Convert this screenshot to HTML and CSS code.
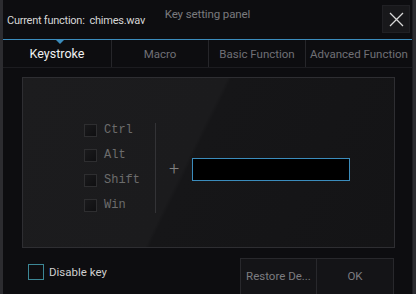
FILE: index.html
```html
<!DOCTYPE html>
<html lang="en">
<head>
    <meta charset="UTF-8">
    <title>Key setting panel</title>
    <link rel="stylesheet" href="styles.css">
</head>
<body>
    <div class="window">
        <div class="titlebar">
            <span class="current">Current function:&nbsp; chimes.wav</span>
            <span class="title">Key setting panel</span>
            <button class="close-btn">
                <svg width="15" height="15" viewBox="0 0 15 15"><path d="M1 1L14 14M14 1L1 14" stroke="#d8d8d8" stroke-width="1.3"/></svg>
            </button>
        </div>

        <div class="tabs">
            <div class="tab active">Keystroke</div>
            <div class="tab">Macro</div>
            <div class="tab">Basic Function</div>
            <div class="tab">Advanced Function</div>
        </div>

        <div class="panel">
            <div class="modifiers">
                <label class="mod"><span class="box"></span>Ctrl</label>
                <label class="mod"><span class="box"></span>Alt</label>
                <label class="mod"><span class="box"></span>Shift</label>
                <label class="mod"><span class="box"></span>Win</label>
            </div>
            <div class="plus">+</div>
            <div class="key-input"></div>
        </div>

        <div class="footer">
            <label class="disable"><span class="check"></span>Disable key</label>
            <div class="actions">
                <button class="btn">Restore De...</button>
                <button class="btn">OK</button>
            </div>
        </div>
    </div>
</body>
</html>
```

FILE: styles.css
```css
body {
    margin: 0;
    background: #2c2c30;
    font-family: Roboto, 'Liberation Sans', Arial, sans-serif;
    font-size: 11px;
    overflow: hidden;
}

.window {
    width: 410px;
    height: 294px;
    margin-left: 3px;
    background: #0d0d10;
    border-right: 1px solid #1e1e22;
    box-sizing: border-box;
}

.titlebar {
    position: relative;
    height: 39px;
    display: flex;
    align-items: center;
    justify-content: space-between;
    padding: 0 2px 0 4px;
    border-bottom: 1px solid #3b8cbc;
}

.current {
    color: #d6d6d6;
    font-size: 11px;
    letter-spacing: -0.25px;
    margin-top: 2px;
}

.title {
    position: absolute;
    left: 0;
    right: 0;
    top: 7px;
    text-align: center;
    color: #7a7a7e;
    font-size: 11.5px;
    letter-spacing: -0.1px;
}

.close-btn {
    width: 28px;
    height: 28px;
    margin-bottom: 1px;
    background: #18181b;
    border: 1px solid #202024;
    padding: 0;
    display: flex;
    align-items: center;
    justify-content: center;
}

.tabs {
    display: flex;
    height: 27px;
    border-bottom: 1px solid #1c1c20;
}

.tab {
    position: relative;
    flex: 0 0 97px;
    display: flex;
    align-items: center;
    justify-content: center;
    color: #707076;
    font-size: 11.5px;
    border-right: 1px solid #26262a;
    box-sizing: border-box;
}

.tab:first-child {
    flex-basis: 109px;
}

.tab:last-child {
    flex: 1;
    border-right: none;
}

.tab.active {
    color: #f0f0f0;
    font-size: 12.5px;
}

.tab.active::before {
    content: '';
    position: absolute;
    top: 0;
    left: 53px;
    border-left: 4px solid transparent;
    border-right: 4px solid transparent;
    border-top: 4px solid #3b8cbc;
}

.panel {
    margin: 9px 17px 0 19px;
    height: 171px;
    box-sizing: border-box;
    border: 1px solid #2e2e32;
    background: linear-gradient(116deg, #1c1c1e 0%, #1b1b1d 45%, #161618 46%, #141416 100%);
    display: flex;
    align-items: center;
    padding: 10px 0 0 61px;
}

.modifiers {
    display: flex;
    flex-direction: column;
    gap: 11px;
    padding-right: 15px;
    border-right: 1px solid #333336;
    height: 90px;
    justify-content: center;
}

.mod {
    display: flex;
    align-items: center;
    gap: 7px;
    height: 14px;
    font-family: 'Liberation Mono', 'Courier New', monospace;
    font-size: 12px;
    color: #6c6c6c;
}

.box {
    width: 11px;
    height: 11px;
    border: 1px solid #2e2e30;
    background: linear-gradient(135deg, #1a1a1c, #0f0f11);
}

.plus {
    width: 36px;
    text-align: center;
    color: #808080;
    font-size: 18px;
    font-weight: 300;
    margin-top: 2px;
}

.key-input {
    width: 158px;
    height: 23px;
    box-sizing: border-box;
    border: 1px solid #3b8cbc;
    background: #000;
    margin-top: 4px;
}

.footer {
    display: flex;
    justify-content: space-between;
    align-items: flex-start;
    padding: 10px 18px 0 25px;
}

.disable {
    display: flex;
    align-items: center;
    gap: 5px;
    margin-top: 6px;
    color: #cfcfcf;
    font-size: 11.5px;
}

.check {
    width: 14px;
    height: 14px;
    border: 1px solid #3c8796;
}

.actions {
    display: flex;
}

.btn {
    width: 77px;
    height: 38px;
    background: #141417;
    border: 1px solid #28282c;
    color: #7c7c80;
    font-family: Roboto, 'Liberation Sans', Arial, sans-serif;
    font-size: 11.5px;
    padding: 0 0 2px;
}

.btn + .btn {
    border-left: none;
}
```
